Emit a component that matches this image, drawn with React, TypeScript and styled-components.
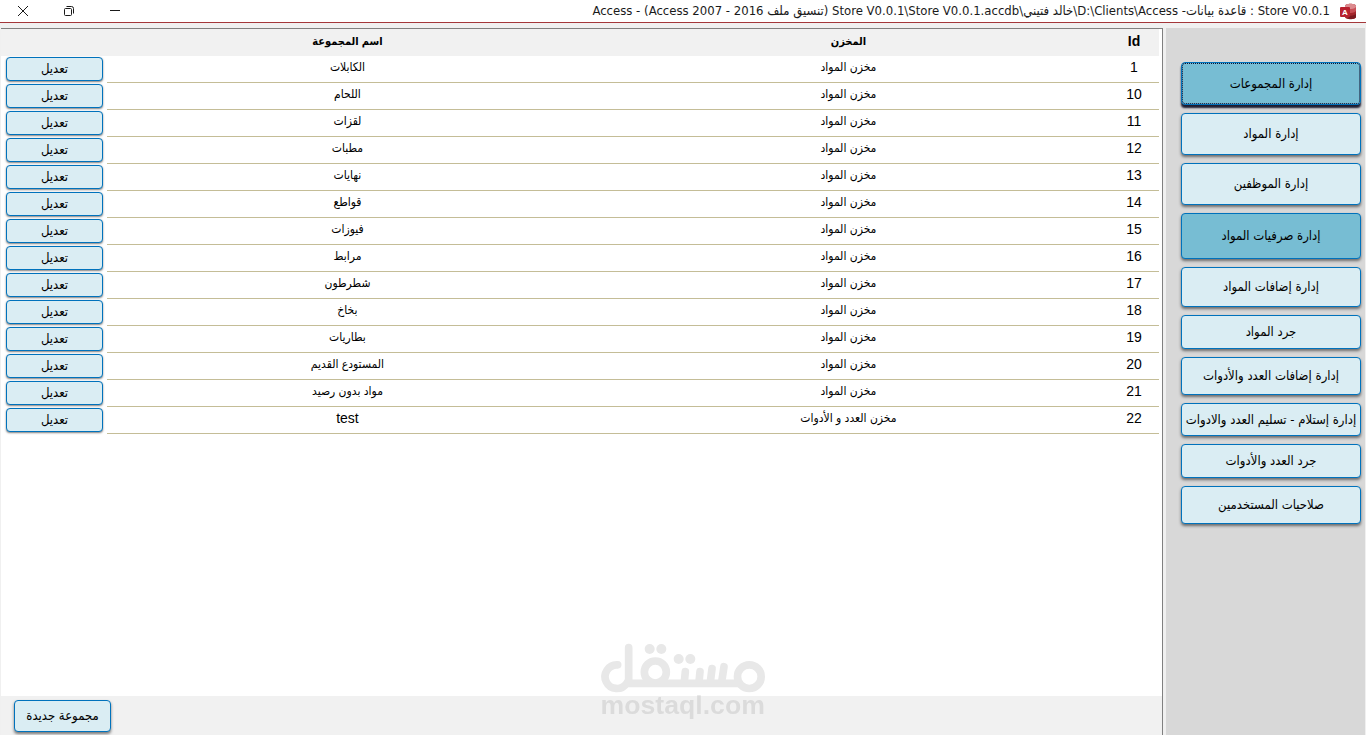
import React from 'react';
import styled, { createGlobalStyle } from 'styled-components';

const GlobalStyle = createGlobalStyle`
  * { box-sizing: border-box; }
  body {
    margin: 0;
    background: #f0f0f0;
    color: #000;
    font-family: 'Liberation Sans', 'DejaVu Sans Condensed', sans-serif;
  }
`;

const Window = styled.div`
  display: flex;
  flex-direction: column;
  min-height: 100vh;
`;

const TitleBar = styled.header`
  display: flex;
  align-items: center;
  gap: 10px;
  height: 23px;
  padding-inline: 9px 0;
  background: #fff;
  border-bottom: 1px solid #a4373a;
`;

const Title = styled.h1`
  flex: 1;
  margin: 0;
  font: 400 13px/20px 'DejaVu Sans Condensed', sans-serif;
  white-space: nowrap;
  color: #1a1a1a;
`;

const WindowControls = styled.div`
  display: flex;
`;

const ControlButton = styled.button`
  display: flex;
  align-items: center;
  justify-content: center;
  width: 46px;
  height: 22px;
  padding: 0;
  border: 0;
  background: transparent;
`;

const Workspace = styled.div`
  flex: 1;
  display: flex;
  gap: 3px;
  padding: 5px 1px 0;
`;

const Sidebar = styled.nav`
  flex: none;
  display: flex;
  flex-direction: column;
  gap: 8px;
  width: 199px;
  padding: 34px 4px 8px 15px;
  background: #d8d8d8;
`;

const ActionButton = styled.button`
  padding: 0 2px;
  border: 1px solid #0072bc;
  border-radius: 4px;
  background: #daedf3;
  box-shadow: 0 2px 3px rgba(0, 0, 0, 0.5);
  color: #000;
  font: 400 13px/16px 'DejaVu Sans Condensed', sans-serif;
  white-space: nowrap;
`;

const NavButton = styled(ActionButton)<{ $height: number; $tone?: 'focused' | 'filled' }>`
  height: ${(p) => p.$height}px;
  background: ${(p) => (p.$tone ? '#77bdd3' : '#daedf3')};
  ${(p) =>
    p.$tone === 'focused' &&
    `
    outline: 1px dotted #101030;
    outline-offset: -2px;
    box-shadow: 0 3px 2px #1c1c30;
  `}
`;

const Form = styled.main`
  flex: 1;
  min-width: 0;
  display: flex;
  flex-direction: column;
  background: #fff;
  border-top: 1px solid #808080;
  border-right: 1px solid #808080;
`;

const FormBody = styled.div`
  flex: 1;
  padding-right: 3px;
`;

const Groups = styled.table`
  width: 100%;
  table-layout: fixed;
  border-collapse: separate;
  border-spacing: 0;
`;

const IdColumn = styled.col`
  width: 50px;
`;

const StoreColumn = styled.col`
  width: 45%;
`;

const EditColumn = styled.col`
  width: 106px;
`;

const HeadCell = styled.th`
  height: 27px;
  padding: 0 0 4px;
  background: #f1f1f1;
  font-size: 14px;
  line-height: 20px;
`;

const HeadLabel = styled.span`
  font-size: 11px;
`;

const Cell = styled.td`
  height: 27px;
  padding: 0 0 4px;
  border-bottom: 1px solid #c4bd97;
  font-size: 14px;
  line-height: 20px;
  text-align: center;
`;

const ArabicCell = styled(Cell)`
  font-size: 12px;
`;

const EditCell = styled.td`
  height: 27px;
  padding: 1px 4px 2px 5px;
`;

const EditButton = styled(ActionButton)`
  display: block;
  width: 97px;
  height: 24px;
  box-shadow: 0 1px 2px rgba(0, 0, 0, 0.5);
`;

const FormFooter = styled.footer`
  display: flex;
  justify-content: flex-end;
  padding: 4px 13px 3px;
  background: #f1f1f1;
`;

const NewButton = styled(ActionButton)`
  width: 97px;
  height: 32px;
`;

const Watermark = styled.svg`
  position: fixed;
  left: 50%;
  bottom: 11px;
  width: 174px;
  height: 84px;
  transform: translateX(-50%);
  opacity: 0.09;
  pointer-events: none;
`;

const AccessIcon = () => (
  <svg width="17" height="17" viewBox="0 0 17 17" aria-hidden="true">
    <path d="M5 3c0-3 11-3 11 0v11c0 3-11 3-11 0z" fill="#a4262c" />
    <path d="M5 3c0-3 11-3 11 0v3c-3 2-8 2-11 0z" fill="#dc8a8e" />
    <path d="M9 6c3 0 5 0 7-2v4c-2 2-5 2-7 2z" fill="#c94f56" />
    <path d="M9 13c3 0 5-1 7-2v3c-1 2-5 2-8 2z" fill="#7a1a20" />
    <rect x="0" y="4" width="10" height="10" rx="1" fill="#b8202e" />
    <text x="5" y="12" textAnchor="middle" direction="ltr" fontFamily="Liberation Sans, sans-serif" fontWeight="700" fontSize="8" fill="#fff">
      A
    </text>
  </svg>
);

const MostaqlLogo = () => (
  <Watermark viewBox="108 60 522 252" role="img" aria-label="مستقل">
    <g fill="none" stroke="#000" strokeWidth="23" strokeLinecap="round">
      <path d="M173 134.500A35.500 35.500 0 1 0 200 190H538" />
      <line x1="206" y1="83" x2="206" y2="184" />
      <circle cx="286" cy="156" r="33" />
      <circle cx="568" cy="170" r="35.500" />
      <line x1="376" y1="155" x2="373" y2="186" />
      <line x1="420" y1="155" x2="417" y2="186" />
      <line x1="456" y1="146" x2="451" y2="186" />
      <line x1="492" y1="140" x2="485" y2="186" />
    </g>
    <g fill="#000">
      <circle cx="269" cy="87" r="15" />
      <circle cx="304" cy="87" r="15" />
      <circle cx="356" cy="117" r="15" />
      <circle cx="391" cy="117" r="15" />
      <text x="368" y="281" textAnchor="middle" direction="ltr" fontFamily="Liberation Sans, sans-serif" fontWeight="700" fontSize="80">
        mostaql.com
      </text>
    </g>
  </Watermark>
);

const stores = { materials: 'مخزن المواد', tools: 'مخزن العدد و الأدوات' };

const groups = [
  { id: 1, name: 'الكابلات', store: stores.materials },
  { id: 10, name: 'اللحام', store: stores.materials },
  { id: 11, name: 'لقزات', store: stores.materials },
  { id: 12, name: 'مطبات', store: stores.materials },
  { id: 13, name: 'نهايات', store: stores.materials },
  { id: 14, name: 'قواطع', store: stores.materials },
  { id: 15, name: 'فيوزات', store: stores.materials },
  { id: 16, name: 'مرابط', store: stores.materials },
  { id: 17, name: 'شطرطون', store: stores.materials },
  { id: 18, name: 'بخاخ', store: stores.materials },
  { id: 19, name: 'بطاريات', store: stores.materials },
  { id: 20, name: 'المستودع القديم', store: stores.materials },
  { id: 21, name: 'مواد بدون رصيد', store: stores.materials },
  { id: 22, name: 'test', store: stores.tools },
];

const navItems: { label: string; height: number; tone?: 'focused' | 'filled' }[] = [
  { label: 'إدارة المجموعات', height: 43, tone: 'focused' },
  { label: 'إدارة المواد', height: 42 },
  { label: 'إدارة الموظفين', height: 42 },
  { label: 'إدارة صرفيات المواد', height: 46, tone: 'filled' },
  { label: 'إدارة إضافات المواد', height: 40 },
  { label: 'جرد المواد', height: 34 },
  { label: 'إدارة إضافات العدد والأدوات', height: 38 },
  { label: 'إدارة إستلام - تسليم العدد والادوات', height: 33 },
  { label: 'جرد العدد والأدوات', height: 34 },
  { label: 'صلاحيات المستخدمين', height: 38 },
];

const isLatin = (text: string) => /^[a-z]/i.test(text);

export default function App() {
  return (
    <Window dir="rtl" lang="ar">
      <GlobalStyle />
      <TitleBar>
        <AccessIcon />
        <Title>
          {'Store V0.0.1 : قاعدة بيانات- D:\\Clients\\Access\\خالد فتيني\\Store V0.0.1\\Store V0.0.1.accdb (تنسيق ملف Access 2007 - 2016) - Access'}
        </Title>
        <WindowControls>
          <ControlButton type="button" aria-label="تصغير">
            <svg width="12" height="12" viewBox="0 0 12 12" fill="none" stroke="#1a1a1a">
              <path d="M1 5.5h10" />
            </svg>
          </ControlButton>
          <ControlButton type="button" aria-label="استعادة">
            <svg width="12" height="12" viewBox="0 0 12 12" fill="none" stroke="#1a1a1a">
              <rect x="1.5" y="3.5" width="7" height="7" rx="1" />
              <path d="M3.5 1.5h5a2 2 0 0 1 2 2v5" />
            </svg>
          </ControlButton>
          <ControlButton type="button" aria-label="إغلاق">
            <svg width="12" height="12" viewBox="0 0 12 12" fill="none" stroke="#1a1a1a">
              <path d="M1 1l10 10M11 1L1 11" />
            </svg>
          </ControlButton>
        </WindowControls>
      </TitleBar>
      <Workspace>
        <Sidebar>
          {navItems.map((item) => (
            <NavButton key={item.label} type="button" $height={item.height} $tone={item.tone}>
              {item.label}
            </NavButton>
          ))}
        </Sidebar>
        <Form>
          <FormBody>
            <Groups>
              <colgroup>
                <IdColumn />
                <StoreColumn />
                <col />
                <EditColumn />
              </colgroup>
              <thead>
                <tr>
                  <HeadCell scope="col">Id</HeadCell>
                  <HeadCell scope="col"><HeadLabel>المخزن</HeadLabel></HeadCell>
                  <HeadCell scope="col"><HeadLabel>اسم المجموعة</HeadLabel></HeadCell>
                  <HeadCell as="td" />
                </tr>
              </thead>
              <tbody>
                {groups.map((group) => (
                  <tr key={group.id}>
                    <Cell>{group.id}</Cell>
                    <ArabicCell>{group.store}</ArabicCell>
                    {isLatin(group.name) ? <Cell>{group.name}</Cell> : <ArabicCell>{group.name}</ArabicCell>}
                    <EditCell>
                      <EditButton type="button">تعديل</EditButton>
                    </EditCell>
                  </tr>
                ))}
              </tbody>
            </Groups>
          </FormBody>
          <FormFooter>
            <NewButton type="button">مجموعة جديدة</NewButton>
          </FormFooter>
        </Form>
      </Workspace>
      <MostaqlLogo />
    </Window>
  );
}
